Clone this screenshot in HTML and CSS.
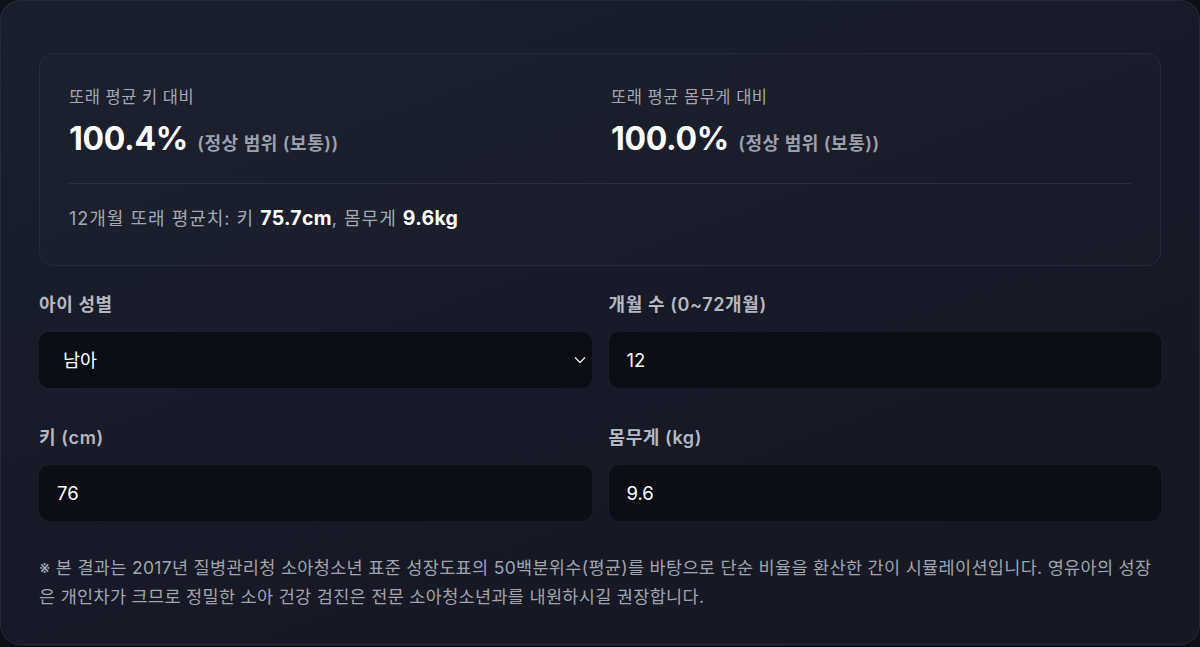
FILE: index.html
```html
<!DOCTYPE html>
<html lang="ko">
<head>
	<meta charset="UTF-8">
	<title>영유아 성장 계산기</title>
	<link rel="stylesheet" href="styles.css">
</head>
<body>
	<div class="card">
		<!-- 결과 요약 -->
		<div class="result">
			<div class="result-grid">
				<div class="stat">
					<div class="stat-label">또래 평균 키 대비</div>
					<div class="stat-value">100.4% <span class="stat-note">(정상 범위 (보통))</span></div>
				</div>
				<div class="stat">
					<div class="stat-label">또래 평균 몸무게 대비</div>
					<div class="stat-value">100.0% <span class="stat-note">(정상 범위 (보통))</span></div>
				</div>
			</div>
			<div class="summary">12개월 또래 평균치: 키 <b>75.7cm</b>, 몸무게 <b>9.6kg</b></div>
		</div>

		<!-- 입력 -->
		<div class="form">
			<div class="field">
				<label class="field-label">아이 성별</label>
				<div class="select-wrap">
					<select class="control select">
						<option>남아</option>
						<option>여아</option>
					</select>
					<svg class="chevron" width="12" height="8" viewBox="0 0 12 8"><path d="M1 1.5l5 5 5-5" fill="none" stroke="#e5e7eb" stroke-width="1.4"/></svg>
				</div>
			</div>
			<div class="field">
				<label class="field-label">개월 수 (0~72개월)</label>
				<input class="control" type="text" value="12">
			</div>
			<div class="field">
				<label class="field-label">키 (cm)</label>
				<input class="control" type="text" value="76">
			</div>
			<div class="field">
				<label class="field-label">몸무게 (kg)</label>
				<input class="control" type="text" value="9.6">
			</div>
		</div>

		<p class="note">※ 본 결과는 2017년 질병관리청 소아청소년 표준 성장도표의 50백분위수(평균)를 바탕으로 단순 비율을 환산한 간이 시뮬레이션입니다. 영유아의 성장은 개인차가 크므로 정밀한 소아 건강 검진은 전문 소아청소년과를 내원하시길 권장합니다.</p>
	</div>
</body>
</html>
```

FILE: styles.css
```css
*{ margin: 0; padding: 0; box-sizing: border-box; }
html, body{ height: 100%; }
body{ background: #0e1018; font-family: "Inter", "Noto Sans CJK KR", sans-serif; color: #e5e7eb; }

.card{ height: 645px; border: 1px solid #262a38; border-radius: 20px; background: linear-gradient(160deg, #1b1e2c 0%, #171a26 60%, #161823 100%); padding: 52px 38px 0; }

.result{ border: 1px solid #272b3a; border-radius: 14px; background: rgba(255,255,255,0.012); padding: 32px 29px 34px; }
.result-grid{ display: grid; grid-template-columns: 1fr 1fr; column-gap: 22px; padding-bottom: 21px; border-bottom: 1px solid #2b2f3d; }
.stat-label{ font-size: 16.5px; line-height: 22px; color: #a4a8b3; letter-spacing: 0.5px; }
.stat-value{ margin-top: 13px; font-size: 32px; line-height: 36px; font-weight: 700; color: #ffffff; letter-spacing: -0.3px; }
.stat-note{ font-size: 18px; font-weight: 600; color: #9ca0ab; letter-spacing: 0.5px; margin-left: 2px; }
.summary{ padding-top: 22px; font-size: 18px; line-height: 24px; color: #a4a8b3; letter-spacing: 1px; }
.summary b{ color: #ffffff; font-weight: 700; font-size: 19.5px; letter-spacing: 0.3px; }

.form{ display: grid; grid-template-columns: 1fr 1fr; column-gap: 17px; row-gap: 38px; margin-top: 27px; }
.field-label{ display: block; font-size: 18px; line-height: 24px; font-weight: 600; color: #b4b8c2; letter-spacing: 0.6px; margin-bottom: 15px; }
.control{ display: block; width: 100%; height: 56px; border: 0; border-radius: 11px; background: #0b0d12; color: #ffffff; font-family: inherit; font-size: 18.5px; padding: 0 18px; outline: none; }
.select-wrap{ position: relative; }
.select{ appearance: none; -webkit-appearance: none; padding-left: 24px; }
.chevron{ position: absolute; right: 6px; top: 24px; pointer-events: none; }

.note{ margin-top: 32px; font-size: 17.5px; line-height: 29px; color: #a0a4ae; letter-spacing: 0.32px; }
```
